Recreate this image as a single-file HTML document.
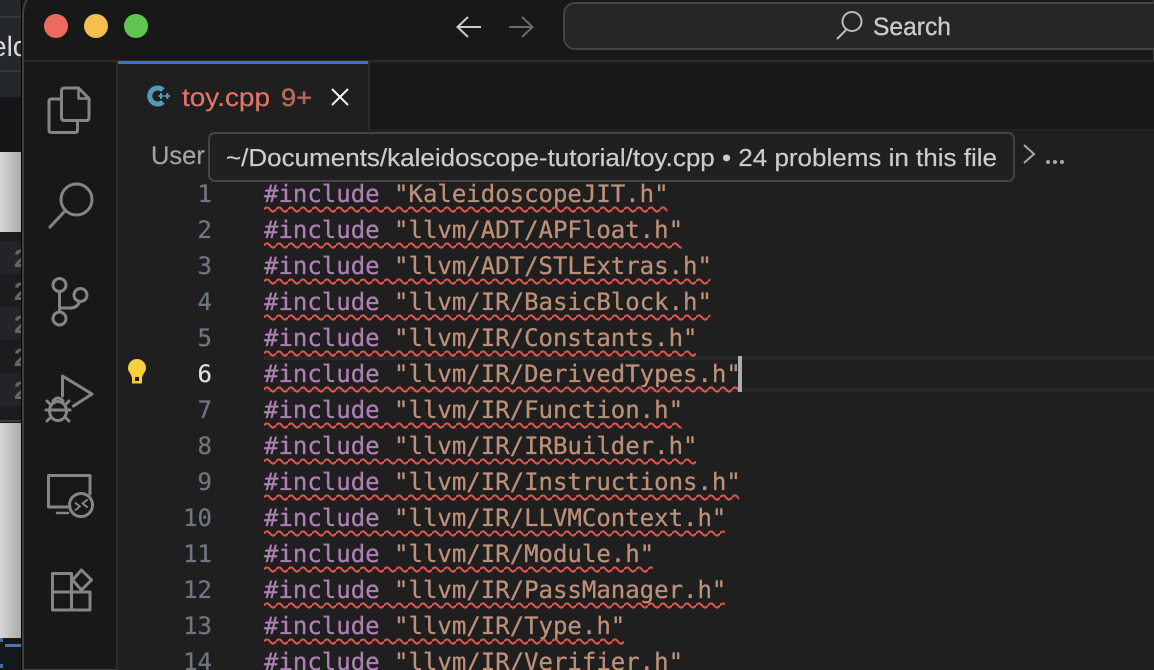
<!DOCTYPE html>
<html><head><meta charset="utf-8"><style>
html,body{margin:0;padding:0;width:1154px;height:670px;overflow:hidden;background:#181818}
svg{display:block;position:absolute;left:0;top:0}
text{white-space:pre;text-rendering:geometricPrecision}
.s{font-family:"Liberation Sans",sans-serif}
.m{font-family:"DejaVu Sans Mono","Liberation Mono",monospace;font-size:24px}
.n{fill:#6e7681;text-anchor:end;stroke:#6e7681;stroke-width:.25px}
.k{fill:#ad7fb5;stroke:#ad7fb5;stroke-width:.3px}.v{fill:#bb8f78;stroke:#bb8f78;stroke-width:.3px}
.i{fill:none;stroke:#858585;stroke-width:3;stroke-linecap:round;stroke-linejoin:round}
</style></head><body>
<svg width="1154" height="670" viewBox="0 0 1154 670" xmlns="http://www.w3.org/2000/svg">
<defs>
<pattern id="w" patternUnits="userSpaceOnUse" x="264" y="0" width="12" height="36" patternTransform="translate(0,206)">
<path d="M0 3.5Q3 -.7 6 3.5T12 3.5" fill="none" stroke="#e5534f" stroke-width="2"/>
</pattern>
<linearGradient id="g" x1="0" x2="1" y1="0" y2="0"><stop offset="0" stop-color="#d6d6d6"/><stop offset="1" stop-color="#a9a9a9"/></linearGradient>
</defs>

<!-- background window -->
<rect x="0" y="0" width="22" height="97" fill="#24282b"/>
<rect x="0" y="16" width="22" height="2" fill="#34383b"/>
<rect x="0" y="70" width="22" height="2" fill="#34383b"/>
<text class="s" x="-9" y="56" font-size="28" fill="#d8d8d8">elc</text>
<rect x="0" y="97" width="22" height="55" fill="#141618"/>
<rect x="0" y="152" width="22" height="80" fill="url(#g)"/>
<rect x="0" y="232" width="22" height="190" fill="#1a1c1e"/>
<rect x="0" y="241" width="22" height="33" fill="#222427"/>
<rect x="0" y="307" width="22" height="33" fill="#222427"/>
<rect x="0" y="373" width="22" height="33" fill="#222427"/>
<g class="s" font-size="25" font-weight="bold" fill="#666">
<text x="14" y="267">2</text><text x="14" y="300">2</text><text x="14" y="333">2</text><text x="14" y="366">2</text><text x="14" y="399">2</text>
</g>
<rect x="0" y="420" width="22" height="2" fill="#3a3a3a"/>
<rect x="0" y="423" width="22" height="215" fill="url(#g)"/>
<rect x="0" y="638" width="22" height="32" fill="#15181b"/>
<rect x="0" y="638" width="3" height="4" fill="#3f6f9f"/>
<rect x="5" y="644" width="16" height="3" fill="#4a78a8"/>
<rect x="0" y="664" width="3" height="4" fill="#3f6f9f"/>

<!-- main window -->
<rect x="21" y="0" width="1" height="670" fill="#050505"/>
<path d="M23 670V14Q23 2 32 -6H1154V670Z" fill="#181818" stroke="#3f3f3f" stroke-width="2"/>
<rect x="24" y="60" width="1130" height="2" fill="#2b2b2b"/>

<!-- editor -->
<rect x="117" y="62" width="1037" height="608" fill="#1f1f1f"/>
<rect x="116" y="62" width="2" height="608" fill="#2b2b2b"/>
<rect x="369" y="63" width="785" height="67" fill="#181818"/>
<rect x="368" y="62" width="2" height="68" fill="#2b2b2b"/>
<rect x="370" y="129" width="784" height="2" fill="#222"/>
<rect x="118" y="61" width="250" height="3" fill="#3376cd"/>

<!-- traffic lights -->
<circle cx="56" cy="26" r="12" fill="#ed6a5e"/>
<circle cx="96" cy="26" r="12" fill="#f4bf4f"/>
<circle cx="136" cy="26" r="12" fill="#61c554"/>

<!-- nav arrows -->
<path d="M481 27H458M468 17L457.500 27L468 37" fill="none" stroke="#cccccc" stroke-width="2"/>
<path d="M509 27H532M522 17L532.500 27L522 37" fill="none" stroke="#6a6a6a" stroke-width="2"/>

<!-- search -->
<rect x="564" y="3" width="640" height="46" rx="11" fill="#262626" stroke="#444" stroke-width="2"/>
<circle cx="852" cy="21.500" r="9.500" fill="none" stroke="#bbb" stroke-width="2"/>
<path d="M846 30L837 39" stroke="#bbb" stroke-width="2" fill="none"/>
<text class="s" x="873" y="35" font-size="25" fill="#cccccc" stroke="#cccccc" stroke-width=".3" textLength="78" lengthAdjust="spacingAndGlyphs">Search</text>

<!-- activity icons -->
<g class="i">
<path d="M61 99H51.500Q49 99 49 101.500V130Q49 132.500 51.500 132.500H75Q77.500 132.500 77.500 130V121"/>
<path d="M64.500 88H78.500L89 98.500V117.500Q89 120.500 86 120.500H64.500Q61.500 120.500 61.500 117.500V91Q61.500 88 64.500 88Z"/>
<path d="M78.500 88V98.500H89" stroke-width="2.500"/>
<circle cx="76.500" cy="199.500" r="15.500"/>
<path d="M65.500 210.500L50 227"/>
<circle cx="59.500" cy="285" r="6.500"/>
<circle cx="59.500" cy="318.500" r="6.500"/>
<circle cx="80.500" cy="295" r="6.500"/>
<path d="M59.500 291.500V312M61 308H70Q77.500 308 79.500 301.500"/>
<path d="M62.500 396V376L92 394L73.500 406"/>
<ellipse cx="58" cy="411" rx="8.500" ry="9.500"/>
<path d="M50 410H66M47 401L51 405M69 401L65 405M46 410H50M70 410H66M47 421L51 417M69 421L65 417M53 401Q58 395 63 401"/>
<path d="M70 507H48.500V475.500H90V494"/>
<path d="M57 513H68" stroke-width="2.500"/>
<circle cx="81" cy="505" r="11.500"/>
<path d="M75.500 503L80 506.500L75.500 510M87 500L82.500 503.500L87 507" stroke-width="2"/>
<path d="M52.500 592V573.500H71.500V610H52.500V592H90V610H71.500"/>
<path d="M81.500 570L91.500 580L81.500 590L72.500 580Z"/>
</g>

<!-- tab -->
<path d="M163 90A8 8 0 1 0 163 102" fill="none" stroke="#519aba" stroke-width="5"/>
<path d="M158.500 96h5M161 93v6M164.500 96h5.500M167.300 93v6" stroke="#519aba" stroke-width="2" fill="none"/>
<text class="s" x="182" y="106" font-size="25.500" fill="#e0766a" stroke="#e0766a" stroke-width=".2" textLength="88" lengthAdjust="spacingAndGlyphs">toy.cpp</text>
<text class="s" x="281" y="106" font-size="25" fill="#b5655a" stroke="#b5655a" stroke-width=".6" textLength="31" lengthAdjust="spacingAndGlyphs">9+</text>
<path d="M332 89L348 105M348 89L332 105" stroke="#f0f0f0" stroke-width="2" fill="none"/>

<!-- breadcrumb -->
<text class="s" x="151" y="164" font-size="25.500" fill="#a3a3a3" stroke="#a3a3a3" stroke-width=".2">User</text>
<path d="M1024 145L1034 154L1024 163" fill="none" stroke="#a8a8a8" stroke-width="2"/>
<circle cx="1048" cy="162" r="2" fill="#a8a8a8"/><circle cx="1055" cy="162" r="2" fill="#a8a8a8"/><circle cx="1062" cy="162" r="2" fill="#a8a8a8"/>

<!-- current line -->
<rect x="264" y="356" width="890" height="4" fill="#282828"/>
<rect x="264" y="388" width="890" height="4" fill="#282828"/>

<!-- line numbers -->
<g class="m">
<text class="n" x="212" y="202">1</text>
<text class="n" x="212" y="238">2</text>
<text class="n" x="212" y="274">3</text>
<text class="n" x="212" y="310">4</text>
<text class="n" x="212" y="346">5</text>
<text class="n" x="212" y="382" style="fill:#dddddd;stroke:#dddddd">6</text>
<text class="n" x="212" y="418">7</text>
<text class="n" x="212" y="454">8</text>
<text class="n" x="212" y="490">9</text>
<text class="n" x="212" y="526">10</text>
<text class="n" x="212" y="562">11</text>
<text class="n" x="212" y="598">12</text>
<text class="n" x="212" y="634">13</text>
<text class="n" x="212" y="670">14</text>

<text x="264" y="202"><tspan class="k">#include</tspan><tspan class="v"> "KaleidoscopeJIT.h"</tspan></text>
<text x="264" y="238"><tspan class="k">#include</tspan><tspan class="v"> "llvm/ADT/APFloat.h"</tspan></text>
<text x="264" y="274"><tspan class="k">#include</tspan><tspan class="v"> "llvm/ADT/STLExtras.h"</tspan></text>
<text x="264" y="310"><tspan class="k">#include</tspan><tspan class="v"> "llvm/IR/BasicBlock.h"</tspan></text>
<text x="264" y="346"><tspan class="k">#include</tspan><tspan class="v"> "llvm/IR/Constants.h"</tspan></text>
<text x="264" y="382"><tspan class="k">#include</tspan><tspan class="v"> "llvm/IR/DerivedTypes.h"</tspan></text>
<text x="264" y="418"><tspan class="k">#include</tspan><tspan class="v"> "llvm/IR/Function.h"</tspan></text>
<text x="264" y="454"><tspan class="k">#include</tspan><tspan class="v"> "llvm/IR/IRBuilder.h"</tspan></text>
<text x="264" y="490"><tspan class="k">#include</tspan><tspan class="v"> "llvm/IR/Instructions.h"</tspan></text>
<text x="264" y="526"><tspan class="k">#include</tspan><tspan class="v"> "llvm/IR/LLVMContext.h"</tspan></text>
<text x="264" y="562"><tspan class="k">#include</tspan><tspan class="v"> "llvm/IR/Module.h"</tspan></text>
<text x="264" y="598"><tspan class="k">#include</tspan><tspan class="v"> "llvm/IR/PassManager.h"</tspan></text>
<text x="264" y="634"><tspan class="k">#include</tspan><tspan class="v"> "llvm/IR/Type.h"</tspan></text>
<text x="264" y="670"><tspan class="k">#include</tspan><tspan class="v"> "llvm/IR/Verifier.h"</tspan></text>
</g>

<!-- squiggles -->
<g fill="url(#w)">
<rect x="264" y="206" width="403.200" height="7"/>
<rect x="264" y="242" width="417.600" height="7"/>
<rect x="264" y="278" width="446.400" height="7"/>
<rect x="264" y="314" width="446.400" height="7"/>
<rect x="264" y="350" width="432" height="7"/>
<rect x="264" y="386" width="475.200" height="7"/>
<rect x="264" y="422" width="417.600" height="7"/>
<rect x="264" y="458" width="432" height="7"/>
<rect x="264" y="494" width="475.200" height="7"/>
<rect x="264" y="530" width="460.800" height="7"/>
<rect x="264" y="566" width="388.800" height="7"/>
<rect x="264" y="602" width="460.800" height="7"/>
<rect x="264" y="638" width="360" height="7"/>
</g>

<!-- cursor -->
<rect x="738" y="356" width="4" height="36" fill="#aeafad"/>

<!-- lightbulb -->
<path d="M137 359A9 9 0 0 1 146 368C146 372 142.500 374 142 378V383.500H132V378C131.500 374 128 372 128 368A9 9 0 0 1 137 359Z" fill="#f8cf3f"/>
<rect x="135" y="377" width="4" height="4" fill="#1f1f1f"/>

<!-- tooltip -->
<rect x="209" y="133" width="805" height="48" rx="6" fill="#202020" stroke="#454545" stroke-width="2"/>
<text class="s" x="226" y="166" font-size="24.500" fill="#cccccc" stroke="#cccccc" stroke-width=".2" textLength="771" lengthAdjust="spacingAndGlyphs">~/Documents/kaleidoscope-tutorial/toy.cpp • 24 problems in this file</text>
</svg>
</body></html>
